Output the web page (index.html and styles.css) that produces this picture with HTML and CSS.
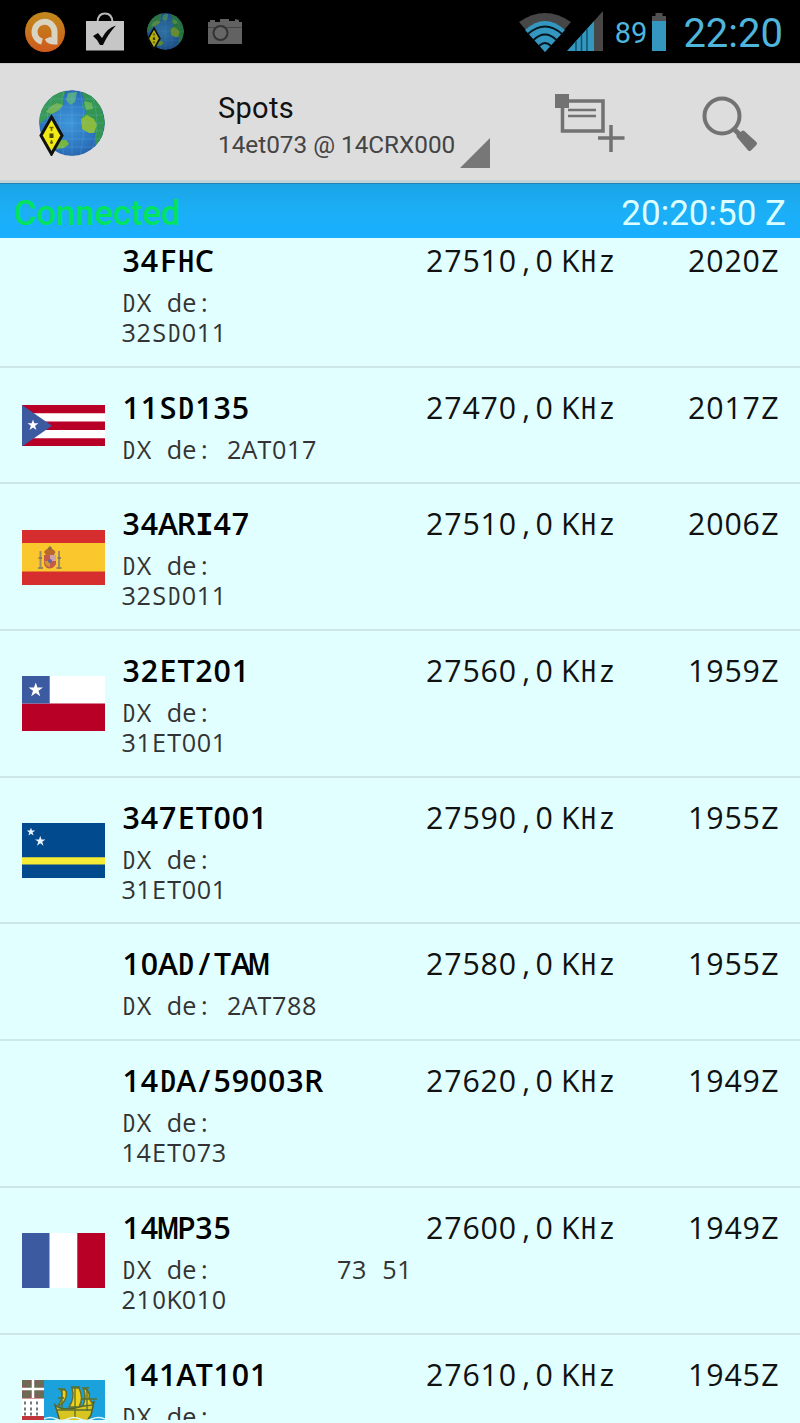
FILE: index.html
```html
<!DOCTYPE html>
<html lang="en">

<head>
    <meta charset="UTF-8">
    <meta name="viewport" content="width=device-width, initial-scale=1.0">
    <title>Spots</title>
    <link rel="stylesheet" href="styles.css">
</head>

<body>
    <svg class="defs" width="0" height="0">
        <defs>
            <radialGradient id="sea" cx="45%" cy="50%" r="60%">
                <stop offset="0" stop-color="#3f97da"/>
                <stop offset="0.7" stop-color="#2b73bd"/>
                <stop offset="1" stop-color="#2a5a9c"/>
            </radialGradient>
            <linearGradient id="orange" x1="0" y1="0" x2="0" y2="1">
                <stop offset="0" stop-color="#c18a1c"/>
                <stop offset="1" stop-color="#cf5a1c"/>
            </linearGradient>
            <clipPath id="globeClip"><circle cx="33" cy="33" r="33"/></clipPath>
            <symbol id="globe" viewBox="0 0 66 66">
                <g clip-path="url(#globeClip)">
                    <circle cx="33" cy="33" r="33" fill="url(#sea)"/>
                    <path d="M0 26 5 13 15 4 27 0 24 8 24 15 17 22 12 24 6 30 0 34z" fill="#389a58"/>
                    <path d="M7 22 12 16 18 13 24 15 20 20 13 24z" fill="#73b556"/>
                    <path d="M29 3 38 2 36 12 31 15 27 10z" fill="#55a987"/>
                    <path d="M42 2 54 6 62 17 66 32 63 47 56 56 57 43 49 42 42 38 42 28 48 22 43 16 46 10z" fill="#329650"/>
                    <path d="M42 29 48 25 55 29 58 35 55 43 50 43 43 39z" fill="#8abb3c"/>
                    <path d="M45 11 53 13 54 19 47 20z" fill="#65b45a"/>
                    <path d="M19 50 27 50 30 54 25 58 17 59z" fill="#78b63c"/>
                    <path d="M8 9H58M3 17H63M0 25H66M0 33H66M0 41H66M3 49H63M9 57H57M33 0V66M25 0Q17 33 25 66M41 0Q49 33 41 66M16 0Q0 33 16 66M50 0Q66 33 50 66" fill="none" stroke="#7fc0ef" stroke-width="0.5" opacity="0.45"/>
                </g>
                <path d="M12.500 27 23 45.500 12.500 64 2 45.500z" fill="#f0ea15" stroke="#111" stroke-width="3"/>
                <path d="M10.500 37.500H14.500M12.500 37.500V41M11 52.500H14M12.500 50V54" fill="none" stroke="#6b6500" stroke-width="1.500"/>
                <path d="M10.500 43.500H14.500V48H10.500z" fill="#4b4700"/>
            </symbol>
            <symbol id="star" viewBox="0 0 20 20">
                <path d="M10 0 12.400 7H20L13.800 11.500 16.200 19 10 14.500 3.800 19 6.200 11.500 0 7H7.600z"/>
            </symbol>
        </defs>
    </svg>

    <div class="status-bar">
        <div class="notifications">
            <svg width="40" height="40" viewBox="0 0 40 40">
                <circle cx="20" cy="20" r="20" fill="url(#orange)"/>
                <path d="M17 29.500A10 10 0 1 1 29.500 19.500V29.500Q24 29.500 22.500 26" fill="none" stroke="#d9d3c2" stroke-width="6"/>
            </svg>
            <svg width="40" height="40" viewBox="0 0 40 40">
                <path d="M12.500 10Q13 1.500 20 1.500T27.500 10" fill="none" stroke="#b9b9b9" stroke-width="2"/>
                <path d="M1 9H39V38.500H1z" fill="#c6c6c6"/>
                <path d="M8 24 13 21 17 26Q22 16 31 13.500Q23 22 18 33H15Q12 27 8 24z" fill="#080808"/>
            </svg>
            <svg class="small-globe" width="37" height="37"><use href="#globe"/></svg>
            <svg width="36" height="28" viewBox="0 0 36 28">
                <path d="M1 4H3V2H8V4H13V1H22V3H28V1L32 2V4H35V26H1z" fill="#626262"/>
                <path d="M1 9.500H35" stroke="#454545" stroke-width="1"/>
                <circle cx="13.500" cy="15" r="7" fill="#666" stroke="#333" stroke-width="2"/>
            </svg>
        </div>
        <div class="system">
            <svg width="52" height="40" viewBox="0 0 52 40">
                <path d="M0 10Q26-8 52 10L26 40z" fill="#464646"/>
                <path d="M6 18Q26 0 46 18L26 40z" fill="#3397c0"/>
                <path d="M9 22Q26 7 43 22M14.500 28Q26 17 37.500 28M20 34Q26 28 32 34" fill="none" stroke="#06151d" stroke-width="2"/>
            </svg>
            <svg class="signal" width="37" height="41" viewBox="0 0 37 41">
                <path d="M27 11 36 1V41H27z" fill="#474747"/>
                <path d="M0 41 27 11V41z" fill="#3397c0"/>
                <path d="M9 31V41M14.500 25V41M20 19V41" stroke="#10526e" stroke-width="1.500"/>
            </svg>
            <span class="percent">89</span>
            <svg class="battery" width="14" height="39" viewBox="0 0 14 39">
                <path d="M3.500 1H10.500V4H14V9H0V4H3.500z" fill="#505050"/>
                <path d="M0 9H14V39H0z" fill="#3397c0"/>
            </svg>
            <span class="clock">22:20</span>
        </div>
    </div>

    <header class="action-bar">
        <svg class="app-icon" width="66" height="66"><use href="#globe"/></svg>
        <div class="titles">
            <h1>Spots</h1>
            <p>14et073 @ 14CRX000</p>
        </div>
        <svg class="spinner" width="30" height="30" viewBox="0 0 30 30"><path d="M0 30 30 0V30z" fill="#777"/></svg>
        <svg class="add" width="70" height="60" viewBox="0 0 70 60" fill="none" stroke="#727272">
            <path d="M7.500 8H48V38H7.500z" stroke-width="3.500"/>
            <path d="M13 17H41M13 23H41" stroke-width="2.500"/>
            <path d="M0 1H14V15H0z" fill="#727272" stroke="none"/>
            <path d="M56 32V59M43 45H69.500" stroke-width="3.500"/>
        </svg>
        <svg class="search" width="56" height="56" viewBox="0 0 56 56">
            <circle cx="20" cy="20" r="17.500" fill="none" stroke="#727272" stroke-width="4"/>
            <path d="M31 32 38 39" stroke="#727272" stroke-width="5"/>
            <path d="M36.500 40 41 36.500 53 47.500 47.500 53z" fill="#727272" stroke="#727272" stroke-width="4" stroke-linejoin="round"/>
        </svg>
    </header>

    <div class="connection">
        <span class="state">Connected</span>
        <span class="utc">20:20:50 Z</span>
    </div>

    <main class="viewport">
        <ul id="spots" class="spots"></ul>
    </main>

    <script>
        const flags = {
            pr: `<svg class="flag" width="83" height="41.500" viewBox="0 0 83 41.500">
                <path d="M0 0H83V41.500H0z" fill="#fff"/>
                <path d="M0 4.150H83M0 20.750H83M0 37.350H83" stroke="#b80027" stroke-width="8.300"/>
                <path d="M0 0 30 20.750 0 41.500z" fill="#3c5aa0"/>
                <use href="#star" x="5.500" y="14.500" width="11" height="11" fill="#fff"/></svg>`,
            es: `<svg class="flag" width="83" height="55" viewBox="0 0 83 55">
                <path d="M0 0H83V55H0z" fill="#d62d2e"/>
                <path d="M0 13H83V41.500H0z" fill="#fac82c"/>
                <path d="M18.500 21V37M37 21V37" stroke="#a08a6e" stroke-width="2"/>
                <path d="M16 38H21M34.500 38H39.500M16.500 28H20M35.500 28H39" stroke="#7f6f62" stroke-width="1.500"/>
                <path d="M22 22Q27.500 14 33.500 22L32 25H24z" fill="#b8692b"/>
                <path d="M26 18H30M28 16V20" stroke="#6f6148" stroke-width="1"/>
                <path d="M22 25H34V34Q32 38 28 38.500T22 34z" fill="#c45a4c"/>
                <path d="M28 25H34V31H28z" fill="#d1a0a6"/>
                <path d="M22.500 31H28V37Q23 36 22.500 31z" fill="#d09a2c"/>
                <circle cx="28" cy="31" r="2" fill="#66639c"/></svg>`,
            cl: `<svg class="flag" width="83" height="55" viewBox="0 0 83 55">
                <path d="M0 0H83V27.500H0z" fill="#fff"/>
                <path d="M0 27.500H83V55H0z" fill="#b80027"/>
                <path d="M0 0H27.700V27.500H0z" fill="#3c5aa0"/>
                <use href="#star" x="6.500" y="6.500" width="14.500" height="14.500" fill="#fff"/></svg>`,
            cw: `<svg class="flag" width="83" height="55" viewBox="0 0 83 55">
                <path d="M0 0H83V55H0z" fill="#004a8d"/>
                <path d="M0 34.300H83V41.500H0z" fill="#f5ec35"/>
                <use href="#star" x="4.700" y="4.500" width="8.500" height="8.500" fill="#e8f3ff"/>
                <use href="#star" x="13" y="12.700" width="10.500" height="10.500" fill="#e8f3ff"/></svg>`,
            fr: `<svg class="flag" width="83" height="55" viewBox="0 0 83 55">
                <path d="M0 0H27.700V55H0z" fill="#3c5aa0"/>
                <path d="M27.700 0H55.300V55H27.700z" fill="#fff"/>
                <path d="M55.300 0H83V55H55.300z" fill="#b80027"/></svg>`,
            pm: `<svg class="flag" width="83" height="55" viewBox="0 0 83 55">
                <path d="M0 0H83V55H0z" fill="#1ba2dc"/>
                <path d="M0 0H22V55H0z" fill="#fff"/>
                <path d="M0 0H22V18H0z" fill="#7c6158"/>
                <path d="M0 0 22 18M22 0 0 18" stroke="#5c7850" stroke-width="2"/>
                <path d="M11 0V18M0 9H22" stroke="#fff" stroke-width="2.500"/>
                <path d="M0 18.500H22" stroke="#d49a9a" stroke-width="1"/>
                <path d="M2 23H20M2 29H20M2 34H20" stroke="#777" stroke-width="3" stroke-dasharray="2 4"/>
                <path d="M0 36H22V55H0z" fill="#c1363b"/>
                <path d="M33 25Q40 31 53 28T72 22L69 35 65 41H38z" fill="#d8c51f" stroke="#555f28" stroke-width="1.500"/>
                <path d="M39 10Q46 8 44 17Q42 24 36 26Q42 18 39 10zM50 8H57Q62 18 57 27H47Q53 18 50 8zM61 8Q69 11 67 18L71 25 61 26Q65 16 61 8z" fill="#efd21e" stroke="#68702b" stroke-width="1.500"/>
                <path d="M36 9H43M49 7H58M61 8H67M36 18H42M60 19H75M34 30H70M53 7V38M40 10V30M65 9V31" fill="none" stroke="#59702c" stroke-width="1.300"/>
                <path d="M22 39Q28 36 34 39T46 39T58 39T70 39T83 39" fill="none" stroke="#e1f4fa" stroke-width="1.500"/></svg>`
        };

        const spots = [
            { flag: '', call: '34FHC', de: '32SD011', freq: '27510,0', time: '2020Z' },
            { flag: 'pr', call: '11SD135', de: '2AT017', freq: '27470,0', time: '2017Z' },
            { flag: 'es', call: '34ARI47', de: '32SD011', freq: '27510,0', time: '2006Z' },
            { flag: 'cl', call: '32ET201', de: '31ET001', freq: '27560,0', time: '1959Z' },
            { flag: 'cw', call: '347ET001', de: '31ET001', freq: '27590,0', time: '1955Z' },
            { flag: '', call: '10AD/TAM', de: '2AT788', freq: '27580,0', time: '1955Z' },
            { flag: '', call: '14DA/59003R', de: '14ET073', freq: '27620,0', time: '1949Z' },
            { flag: 'fr', call: '14MP35', de: '21OK010', freq: '27600,0', time: '1949Z', comment: '73 51' },
            { flag: 'pm', call: '141AT101', de: '', freq: '27610,0', time: '1945Z' }
        ];

        // wide capitals are set condensed so that they fit one column
        function kind(r) {
            if (r === 'M') return ' widest';
            if (r === 'I') return ' slab';
            if (/[DHNO]/.test(r)) return ' wider';
            return /[ACKRX]/.test(r) ? ' wide' : '';
        }

        const run = r => `<span class="run${kind(r)}">${r}</span>`;
        const word = w => `<span class="word">${w.match(/[0-9]+|[a-z]+|[A-Z,:\/]/g).map(run).join('')}</span>`;
        const words = text => text.split(' ').filter(w => w).map(word).join(' ');

        document.getElementById('spots').innerHTML = spots.map(s => `
            <li class="spot">
                <div class="flag-cell">${flags[s.flag] || ''}</div>
                <div class="call large">${words(s.call)}</div>
                <div class="freq large">${words(s.freq + ' KHz')}</div>
                <div class="time large">${words(s.time)}</div>
                <div class="de small">${words('DX de: ' + s.de)}</div>
                <div class="comment small">${words(s.comment || '')}</div>
            </li>`).join('');

        // give every character the same advance
        const runs = [...document.querySelectorAll('.run')];
        const gaps = runs.map(el => {
            const pitch = el.closest('.large') ? 18.200 : 15.050;
            return pitch - el.getBoundingClientRect().width / el.textContent.length;
        });
        runs.forEach((el, i) => {
            if (el.textContent.length === 1) {
                el.style[gaps[i] > 0 ? 'padding' : 'margin'] = `0 ${gaps[i] / 2}px`;
            } else {
                el.style.letterSpacing = `${gaps[i]}px`;
            }
        });
    </script>
</body>

</html>
```
FILE: styles.css
```css
* {
    box-sizing: border-box;
}

body {
    margin: 0;
    width: 800px;
    height: 1423px;
    overflow: hidden;
    background: #e2ffff;
    font-family: Roboto, sans-serif;
}

svg {
    display: block;
    flex: none;
}

.defs {
    position: absolute;
}

.status-bar {
    display: flex;
    justify-content: space-between;
    height: 63px;
    padding: 0 17px 0 25px;
    background: #000;
    color: #4fb5dc;
}

.notifications {
    display: flex;
    align-items: center;
    gap: 20px;
}

.small-globe {
    margin-left: 2px;
    margin-right: 3px;
    filter: brightness(0.75);
}

.system {
    display: flex;
    align-items: center;
}

.signal {
    margin-left: -4px;
    margin-top: -2px;
}

.percent {
    margin-left: 11px;
    padding-top: 2px;
    font-size: 29px;
    line-height: 40px;
}

.battery {
    margin-left: 5px;
    margin-top: -1px;
}

.clock {
    margin-left: 17px;
    font-size: 40px;
    line-height: 63px;
    padding-top: 3px;
}

.action-bar {
    display: flex;
    height: 120px;
    padding-left: 39px;
    background: #dddddd;
    border-top: 1px solid #c9c9c9;
    border-bottom: 3px solid #c4d3d8;
}

.app-icon {
    margin-top: 26px;
}

.titles {
    width: 243px;
    margin-left: 113px;
    padding-top: 26px;
    white-space: nowrap;
}

.titles h1 {
    margin: 0;
    font-size: 29px;
    font-weight: 400;
    line-height: 37px;
    letter-spacing: 0.300px;
    color: #111;
}

.titles p {
    margin: 0;
    font-size: 24.300px;
    line-height: 36px;
    color: #444;
}

.spinner {
    margin-top: 74px;
    margin-left: -1px;
}

.add {
    margin-top: 29px;
    margin-left: 65px;
}

.search {
    margin-top: 32px;
    margin-left: 77px;
}

.connection {
    display: flex;
    justify-content: space-between;
    height: 55px;
    padding: 0 14px;
    border-top: 1px solid #2381b2;
    background: linear-gradient(#1ba4e6, #1baff6 50%, #1aafff);
    font-size: 35px;
    line-height: 59px;
}

.state {
    font-size: 34.500px;
    font-weight: 500;
    color: #02e35f;
}

.utc {
    color: #dcffff;
}

.viewport {
    height: 1182px;
    overflow: hidden;
    background: #e2ffff;
    font-family: "Open Sans", "Noto Sans", sans-serif;
}

.spots {
    margin: -17px 0 0;
    padding: 0;
    list-style: none;
}

.spot {
    display: grid;
    grid-template-columns: 122px 204px 100px 262px 112px;
    grid-template-rows: 36px auto;
    row-gap: 8px;
    padding: 22px 0 18.700px;
    border-bottom: 2px solid #cde6e6;
    color: #111;
}

.spot > div {
    white-space: nowrap;
}

.spot .flag-cell {
    grid-row: 1 / 3;
    align-self: center;
    padding-left: 22px;
    margin: -21px 0 -18.700px;
}

.word {
    display: inline-block;
}

.wide {
    font-stretch: 90%;
}

.wider {
    font-stretch: 83%;
}

.widest {
    font-stretch: 75%;
}

.slab {
    font-family: "DejaVu Sans Mono", monospace;
    line-height: 1;
}

.large {
    font-size: 30.300px;
    line-height: 36px;
}

.small {
    font-size: 25.200px;
    line-height: 30px;
    word-spacing: 8.500px;
    color: #333;
}

.spot .call {
    grid-column: 2 / 4;
    padding-left: 0.500px;
    font-weight: 600;
    color: #000;
}

.spot .de {
    grid-column: 2;
    grid-row: 2;
    margin-left: -0.500px;
    white-space: normal;
}

.spot:last-child .de {
    min-height: 60px;
}

.comment {
    grid-column: 3 / 5;
    grid-row: 2;
    padding-left: 11px;
}
```
